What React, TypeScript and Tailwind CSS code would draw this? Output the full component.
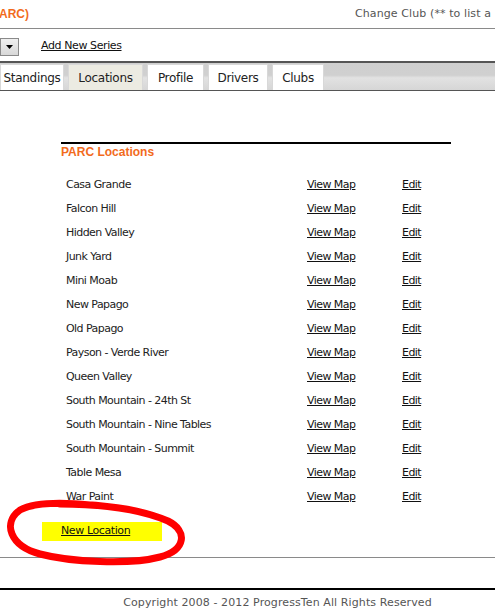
import React from "react";

const locations = [
  "Casa Grande",
  "Falcon Hill",
  "Hidden Valley",
  "Junk Yard",
  "Mini Moab",
  "New Papago",
  "Old Papago",
  "Payson - Verde River",
  "Queen Valley",
  "South Mountain - 24th St",
  "South Mountain - Nine Tables",
  "South Mountain - Summit",
  "Table Mesa",
  "War Paint",
];

const tabs = [
  { label: "Standings", w: "w-[64px]", active: false },
  { label: "Locations", w: "w-[75px]", active: true },
  { label: "Profile", w: "w-[57px]", active: false },
  { label: "Drivers", w: "w-[60px]", active: false },
  { label: "Clubs", w: "w-[52px]", active: false },
];

export default function App() {
  return (
    <div className="relative w-[495px] h-[611px] overflow-hidden bg-white font-['DejaVu_Sans',sans-serif] text-[11px] text-[#222]">
      {/* header */}
      <div className="flex h-[29px] items-center border-b border-[#8a8a8a] whitespace-nowrap overflow-hidden">
        <span className="ml-[-1px] w-[25px] shrink-0 font-bold text-[12px] text-[#f26b1d] font-['Liberation_Sans',sans-serif]">ARC)</span>
        <span className="ml-[331px] shrink-0 text-[#555] tracking-[0.1px]">Change Club (** to list a</span>
      </div>
      {/* series row */}
      <div className="flex h-[32px] items-center pt-[3px]">
        <div className="flex h-[18px] w-[19px] items-center justify-center border border-[#8a8a8a] bg-[linear-gradient(#f0f0f0,#d8d8d8)]">
          <svg width="7" height="4" viewBox="0 0 7 4"><path d="M0 0 H7 L3.5 4 Z" fill="#000" /></svg>
        </div>
        <a className="ml-[22px] underline text-[#111] text-[11px] tracking-[-0.4px]" href="#">Add New Series</a>
      </div>
      {/* tab bar */}
      <div className="flex h-[30px] items-end gap-[4px] border-t-2 border-b border-t-[#555] border-b-[#555] bg-[linear-gradient(#cfcfcf_0%,#d0d0d0_45%,#e2e2e2_55%,#d6d6d6_100%)]">
        {tabs.map((t) => (
          <div
            key={t.label}
            className={`${t.w} flex h-[26px] items-center justify-center border border-b-0 border-[#d8d8d8] text-[12px] tracking-[-0.3px] text-[#222] ${t.active ? "bg-[#ecebe2]" : "bg-white"}`}
          >
            {t.label}
          </div>
        ))}
      </div>
      {/* content */}
      <div className="ml-[61px] mt-[51px] w-[390px]">
        <div className="border-t-2 border-black">
          <div className="h-[16px] leading-[16px] font-bold text-[12px] text-[#f26b1d] font-['Liberation_Sans',sans-serif]">PARC Locations</div>
        </div>
        <div className="mt-[13px] flex flex-col">
          {locations.map((name) => (
            <div key={name} className="flex h-[24px] items-center tracking-[-0.55px]">
              <span className="ml-[5px] w-[241px]">{name}</span>
              <a href="#" className="w-[95px] underline text-[#111]">View Map</a>
              <a href="#" className="underline text-[#111]">Edit</a>
            </div>
          ))}
        </div>
      </div>
      <div className="ml-[42px] mt-[13px] flex h-[19px] w-[120px] items-center bg-[#ffff00]">
        <a href="#" className="ml-[19px] underline text-[#111] tracking-[-0.4px]">New Location</a>
      </div>
      <div className="mt-[16px] border-b border-[#8a8a8a]" />
      <div className="mt-[30px] border-t-2 border-black" />
      <div className="mt-[5px] text-center text-[#555] tracking-[0.1px] pl-[60px]">Copyright 2008 - 2012 ProgressTen All Rights Reserved</div>

      {/* red annotation */}
      <svg className="pointer-events-none absolute left-0 top-0" width="495" height="611">
        <path
          d="M60 504 C100 504, 140 509, 168 521 C188 531, 186 550, 160 557 C130 565, 70 562, 40 554 C10 546, 2 523, 20 510 C35 502, 60 502, 90 505"
          fill="none"
          stroke="#ff0000"
          strokeWidth="7"
          strokeLinecap="round"
        />
      </svg>
    </div>
  );
}
